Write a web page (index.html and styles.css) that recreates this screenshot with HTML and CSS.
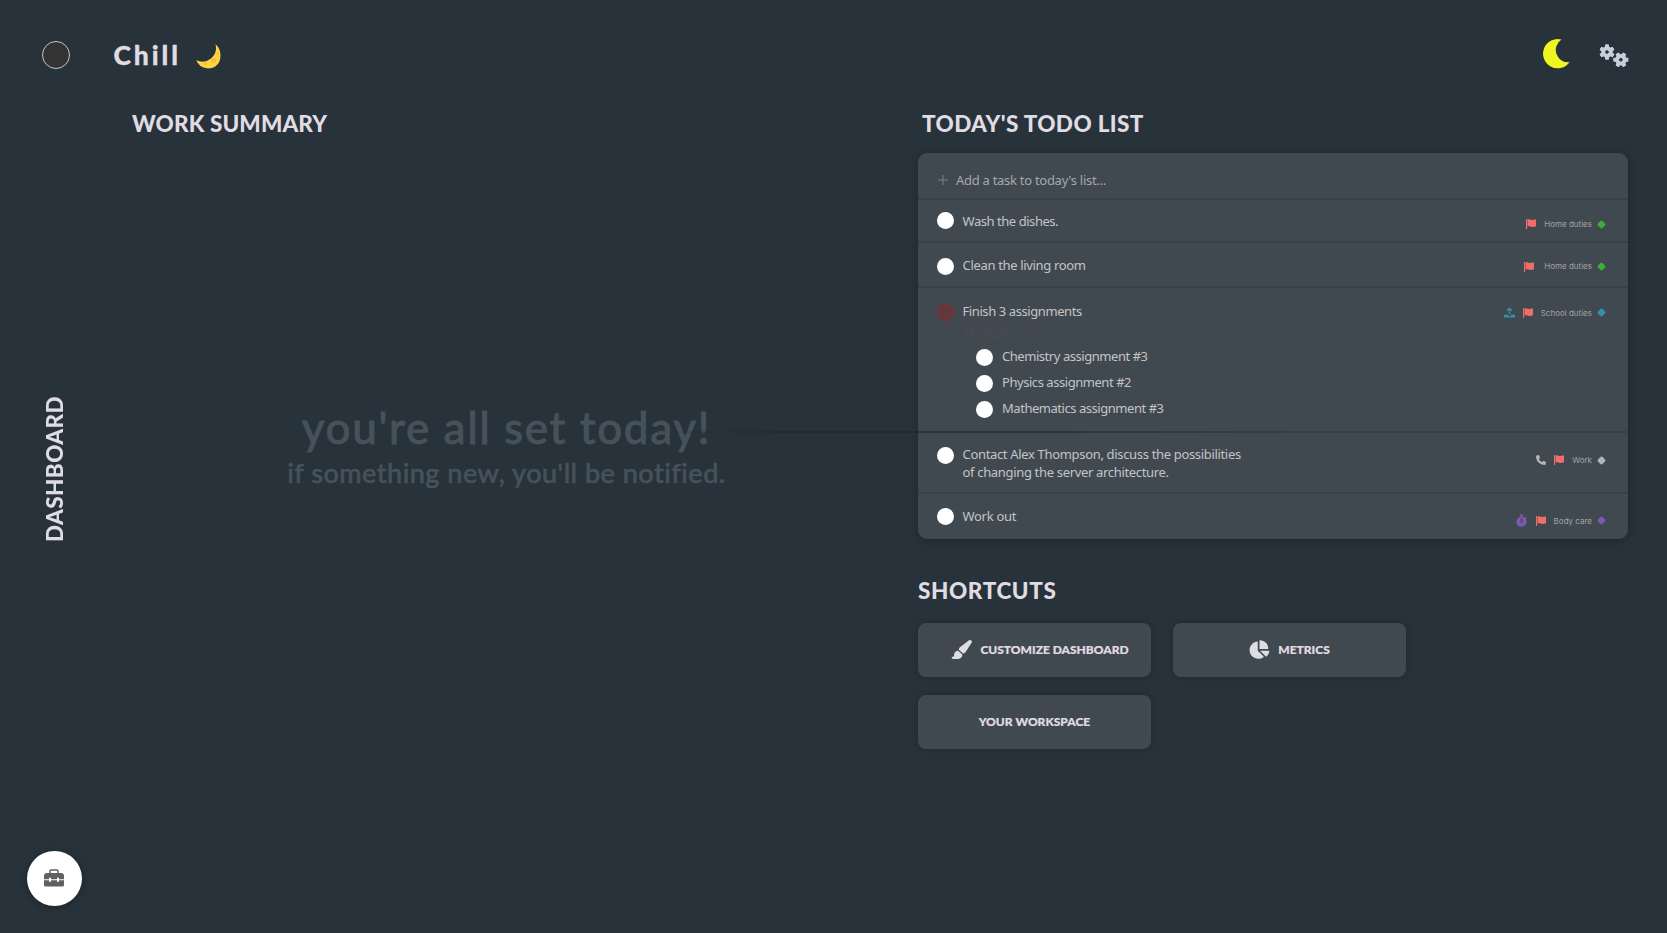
FILE: index.html
```html
<!DOCTYPE html>
<html lang="en">
<head>
<meta charset="utf-8">
<title>Chill – Dashboard</title>
<link rel="stylesheet" href="styles.css">
</head>
<body>
<svg class="defs" aria-hidden="true">
  <symbol id="flag" viewBox="0 0 20 20"><path d="M0 0h2.200v20H0z"/><path d="M3 1c4-1.500 6 1.500 9.500 1 2.500-.3 4-1 7.500-1v14c-3.500 0-5 1-7.500 1-3.500 0-5.500-2-9.500-1z"/></symbol>
  <symbol id="diamond" viewBox="0 0 20 20"><rect x="2.800" y="2.800" width="14.400" height="14.400" rx="4" transform="rotate(45 10 10)"/></symbol>
  <symbol id="gear" viewBox="-8 -8 16 16">
    <circle r="3.900" fill="none" stroke="currentColor" stroke-width="3.800"/>
    <g id="teeth"><rect x="-2" y="-7.700" width="4" height="15.400" rx="1" mask="url(#hole)"/><rect x="-2" y="-7.700" width="4" height="15.400" rx="1" transform="rotate(60)" mask="url(#hole)"/><rect x="-2" y="-7.700" width="4" height="15.400" rx="1" transform="rotate(120)" mask="url(#hole)"/></g>
  </symbol>
  <mask id="hole" maskUnits="userSpaceOnUse" x="-8" y="-8" width="16" height="16"><rect x="-8" y="-8" width="16" height="16" fill="#fff"/><circle r="2.100" fill="#000"/></mask>
</svg>

<aside class="rail">
  <button class="avatar" aria-label="Profile"></button>
  <div class="rail-title">DASHBOARD</div>
  <button class="toolbox" aria-label="Tools">
    <svg viewBox="0 0 20 18"><path d="M6 5V2a1 1 0 0 1 1-1h6a1 1 0 0 1 1 1v3" fill="none" stroke="currentColor" stroke-width="1.500"/><path d="M3 4h14a3 3 0 0 1 3 3v3.200h-5V9.500a1 1 0 0 0-2 0v.7H7v-.7a1 1 0 0 0-2 0v.7H0V7a3 3 0 0 1 3-3z"/><path d="M0 11.200h5V12a1 1 0 0 0 2 0v-.8h6V12a1 1 0 0 0 2 0v-.8h5V16a1.500 1.500 0 0 1-1.500 1.500h-17A1.500 1.500 0 0 1 0 16z"/></svg>
  </button>
</aside>

<div class="page">
  <header class="topbar">
    <h1 class="brand"><span class="brand-name">Chill</span>
      <svg class="crescent" viewBox="0 0 25 25"><path d="M19.500 .3A13.800 13.800 0 0 1 .3 16.300 12.800 12.800 0 0 0 23 18.500C25.600 13 25 4.500 19.500 .3z" fill="#ffd43f"/><circle cx="17.500" cy="16.500" r="2.600" fill="#f8bd3b"/><circle cx="9.500" cy="19.500" r="1.600" fill="#f8bd3b"/><circle cx="21.500" cy="9.500" r="1.300" fill="#f8bd3b"/></svg>
    </h1>
    <nav class="actions">
      <svg class="moon" viewBox="0 0 27 30"><path d="M18.500 .6A12.300 12.300 0 0 0 26.500 23.200 14.600 14.600 0 1 1 18.500 .6z"/></svg>
      <svg class="cogs" viewBox="0 0 30 24"><use href="#gear" x="0" y="0" width="16" height="16"/><g transform="rotate(30 21.900 15.800)"><use href="#gear" x="13.900" y="7.800" width="16" height="16"/></g></svg>
    </nav>
  </header>

  <main class="columns">
    <section class="summary">
      <h2 class="heading"><span class="t-summary">WORK SUMMARY</span></h2>
      <div class="empty">
        <p class="empty-big">you're all set today!</p>
        <p class="empty-small">if something new, you'll be notified.</p>
      </div>
    </section>

    <section class="side">
      <h2 class="heading heading-todo"><span class="t-todo">TODAY'S TODO LIST</span></h2>
      <div class="todo">
        <div class="row add"><svg class="plus" viewBox="0 0 10 10"><path d="M5 0v10M0 5h10"/></svg><span class="text w-add">Add a task to today's list...</span></div>

        <div class="row wash"><i class="check"></i><span class="text w-wash">Wash the dishes.</span>
          <div class="meta"><svg class="flag"><use href="#flag"/></svg><span class="tag">Home duties</span><svg class="dot green"><use href="#diamond"/></svg></div></div>

        <div class="row clean"><i class="check"></i><span class="text w-clean">Clean the living room</span>
          <div class="meta"><svg class="flag"><use href="#flag"/></svg><span class="tag">Home duties</span><svg class="dot green"><use href="#diamond"/></svg></div></div>

        <div class="row finish"><i class="check active"></i>
          <div class="body"><span class="text w-finish">Finish 3 assignments</span><span class="steps">Multiple steps &nbsp;&gt;</span>
            <ul class="subs">
              <li><i class="check"></i><span class="text w-chem">Chemistry assignment #3</span></li>
              <li><i class="check"></i><span class="text w-phys">Physics assignment #2</span></li>
              <li><i class="check"></i><span class="text w-math">Mathematics assignment #3</span></li>
            </ul></div>
          <div class="meta"><svg class="upload" viewBox="0 0 22 22"><path d="M11 15V3M6 7.500l5-5 5 5" fill="none" stroke="currentColor" stroke-width="2.600"/><path d="M0 15.500h7.500a3.500 3 0 0 0 7 0H22V21H0z"/></svg><svg class="flag"><use href="#flag"/></svg><span class="tag">School duties</span><svg class="dot blue"><use href="#diamond"/></svg></div></div>

        <div class="row contact"><i class="check"></i><span class="text w-contact">Contact Alex Thompson, discuss the possibilities<br>of changing the server architecture.</span>
          <div class="meta"><svg class="phone" viewBox="0 0 512 512"><path d="M164.900 24.600c-7.700-18.600-28-28.500-47.400-23.200l-88 24C12.100 30.200 0 46 0 64C0 311.400 200.600 512 448 512c18 0 33.800-12.100 38.600-29.500l24-88c5.300-19.400-4.600-39.700-23.200-47.400l-96-40c-16.300-6.800-35.200-2.100-46.300 11.600L304.700 368C234.300 334.700 177.300 277.700 144 207.300L193.300 167c13.700-11.200 18.400-30 11.600-46.300l-40-96z"/></svg><svg class="flag"><use href="#flag"/></svg><span class="tag">Work</span><svg class="dot grey"><use href="#diamond"/></svg></div></div>

        <div class="row workout"><i class="check"></i><span class="text w-work">Work out</span>
          <div class="meta"><svg class="watch" viewBox="0 0 448 512"><path d="M432 304c0 114.900-93.100 208-208 208S16 418.900 16 304c0-104 76.300-190.200 176-205.500V64h-28c-6.600 0-12-5.400-12-12V12c0-6.600 5.400-12 12-12h120c6.600 0 12 5.400 12 12v40c0 6.600-5.400 12-12 12h-28v34.500c37.500 5.800 71.700 21.600 99.700 44.600l27.500-27.500c4.700-4.700 12.300-4.700 17 0l28.300 28.300c4.700 4.700 4.700 12.300 0 17l-29.400 29.400-.6.6C419.700 223.300 432 262.200 432 304zm-176 36V188.500c0-6.600-5.400-12-12-12h-40c-6.600 0-12 5.400-12 12V340c0 6.600 5.400 12 12 12h40c6.600 0 12-5.400 12-12z"/></svg><svg class="flag"><use href="#flag"/></svg><span class="tag">Body care</span><svg class="dot purple"><use href="#diamond"/></svg></div></div>
      </div>

      <h2 class="heading heading-short"><span class="t-short">SHORTCUTS</span></h2>
      <div class="shortcuts">
        <button class="shortcut customize"><svg viewBox="16 0 560 512"><path d="M339.300 367.100c27.300-3.900 51.900-19.400 67.200-42.900L568.200 74.100c12.600-19.500 9.400-45.300-7.600-61.200S517.700-4.400 499.100 9.600L262.400 187.200c-24 18-38.200 46.100-38.400 76.100L339.300 367.100zm-19.600 25.400l-116-104.400C143.900 290.300 96 339.600 96 400c0 3.900 .2 7.800 .6 11.600C98.400 429.100 86.400 448 68.800 448H64c-17.700 0-32 14.300-32 32s14.300 32 32 32H208c61.900 0 112-50.100 112-112c0-2.500-.1-5-.2-7.500z"/></svg><span>CUSTOMIZE DASHBOARD</span></button>
        <button class="shortcut"><svg viewBox="16 0 576 512"><path d="M304 240V16.600c0-9 7-16.600 16-16.600C443.700 0 544 100.300 544 224c0 9-7.600 16-16.600 16H304zM32 272C32 150.700 122.100 50.300 239 34.300c9.200-1.300 17 6.100 17 15.400V288L412.500 444.500c6.700 6.700 6.200 17.700-1.500 23.100C371.800 495.600 323.800 512 272 512C139.500 512 32 404.600 32 272zm526.400 16c9.300 0 16.600 7.800 15.400 17c-7.700 55.900-34.600 105.600-73.900 142.300c-6 5.600-15.400 5.200-21.200-.7L320 288H558.400z"/></svg><span>METRICS</span></button>
        <button class="shortcut"><span>YOUR WORKSPACE</span></button>
      </div>
    </section>
  </main>
</div>
<div class="seam"></div>
</body>
</html>
```
FILE: styles.css
```css
* { box-sizing: border-box; }
body {
  margin: 0;
  height: 933px;
  display: flex;
  overflow: hidden;
  background: #27323a;
  color: #e0dce3;
  font-family: "Noto Sans", sans-serif;
  position: relative;
}
h1, h2, p, ul { margin: 0; padding: 0; }
svg { display: block; fill: currentColor; flex: none; }
button { border: 0; padding: 0; color: inherit; font: inherit; }
.defs { position: absolute; width: 0; height: 0; }

.rail {
  width: 110px;
  padding: 41px 0 27px 27px;
  display: flex;
  flex-direction: column;
  justify-content: space-between;
}
.avatar {
  width: 28px;
  height: 28px;
  margin-left: 14.5px;
  border: 1px solid #c9c6cc;
  border-radius: 50%;
  background: #333334;
}
.rail-title {
  margin: 17px 0 0 14px;
  writing-mode: vertical-rl;
  transform: rotate(180deg);
  width: 28px;
  font: 900 22.5px/28px Lato, sans-serif;
  letter-spacing: .4px;
}
.toolbox {
  width: 55px;
  height: 55px;
  margin-left: -.5px;
  border-radius: 50%;
  background: #fff;
  color: #5f6062;
  display: grid;
  place-items: center;
  box-shadow: 0 1px 7px rgba(0, 0, 0, .3);
}
.toolbox svg { width: 20px; height: 18px; }

.page { flex: 1; padding-right: 38px; }
.topbar {
  height: 110px;
  padding: 38px 0 0 3.5px;
  display: flex;
  justify-content: space-between;
}
.brand {
  display: flex;
  align-items: flex-start;
  font: 900 26.5px/34px Lato, sans-serif;
}
.brand-name { width: 82.5px; letter-spacing: 2.9px; -webkit-text-stroke: .3px; }
.crescent { width: 25px; height: 25px; margin-top: 6px; }
.actions { display: flex; align-items: flex-start; gap: 29px; }
.moon { width: 27px; height: 30px; margin-top: 1px; color: #eef51f; }
.cogs { width: 30px; height: 24px; margin-top: 6px; color: #c9cddb; }

.columns { display: grid; grid-template-columns: 808px 710px; }
.heading { font: 900 22.5px/28px Lato, sans-serif; white-space: nowrap; }
.summary .heading { padding-left: 22px; }
.heading-todo { padding-left: 4px; }
.t-summary { letter-spacing: .13px; }
.t-todo { letter-spacing: .38px; }
.t-short { letter-spacing: .6px; }
.empty { margin-top: 259px; width: 793px; text-align: center; color: #46515a; font-family: Lato, sans-serif; white-space: nowrap; }
.empty-big { font-size: 44px; line-height: 60px; font-weight: 500; letter-spacing: 1.6px; -webkit-text-stroke: .8px; }
.empty-small { font-size: 27px; line-height: 30px; padding-top: 1px; font-weight: 500; letter-spacing: .5px; -webkit-text-stroke: .6px; }

.todo {
  margin-top: 15px;
  height: 386px;
  border-radius: 9px;
  background: #414950;
  color: #c3c4c6;
  box-shadow: 0 1px 9px rgba(0, 0, 0, .25);
}
.row { display: flex; align-items: flex-start; padding: 0 22px 0 19px; border-bottom: 2px solid #394047; }
.text { font-size: 13px; line-height: 18px; white-space: nowrap; }
.w-add { letter-spacing: -.28px; }
.w-wash, .w-chem, .w-phys { letter-spacing: -.45px; }
.w-math { letter-spacing: -.46px; }
.w-clean, .w-contact { letter-spacing: -.33px; }
.w-finish { letter-spacing: -.41px; }
.w-work { letter-spacing: -.3px; }
.check { flex: none; width: 17px; height: 17px; margin-right: 8.5px; border-radius: 50%; background: #fff; }
.check.active { background: #5f393c; border: 1px solid #94282d; }
.add { height: 47px; padding-top: 18px; color: #a4a8ab; }
.plus { width: 10px; height: 10px; margin: 4px 8px 0 1px; stroke: #7b8186; fill: none; }
.wash { height: 43px; padding-top: 12px; }
.clean { height: 45px; padding-top: 13px; }
.clean > .check { margin-top: 2px; }
.finish { height: 145px; padding-top: 14px; }
.finish > .check { margin-top: 2px; }
.contact { height: 61px; padding-top: 12px; }
.contact > .check { margin-top: 2px; }
.workout { height: 45px; padding-top: 12.5px; border: 0; }
.workout > .check { margin-top: 1px; }
.body { display: flex; flex-direction: column; }
.steps { margin-top: 4px; font-size: 13px; line-height: 18px; color: #4a4b4e; }
.subs { margin: 5px 0 0 13px; list-style: none; }
.subs li { height: 26px; display: flex; }
.subs .check { margin-top: 2px; margin-right: 9.5px; }

.meta { margin-left: auto; display: flex; align-items: center; height: 14px; }
.wash .meta { margin-top: 5px; }
.clean .meta { margin-top: 3px; }
.finish .meta { margin-top: 3.5px; }
.contact .meta { margin-top: 8px; }
.workout .meta { margin-top: 7px; }
.flag { width: 10px; height: 10px; color: #f36c6c; margin-right: 8px; }
.wash .flag { margin-top: -1px; }
.clean .flag { margin-right: 10px; margin-top: 1px; }
.tag { font: 8px/14px Inter, sans-serif; color: #a0a3a6; margin-right: 5px; }
.dot { width: 9px; height: 9px; }
.green { color: #3aae36; }
.blue { color: #3490b1; }
.grey { color: #b4b4b4; }
.purple { color: #7e57b2; }
.upload { width: 11px; height: 11px; margin-right: 8px; color: #3490b1; }
.phone { width: 10px; height: 10px; margin-right: 8px; color: #b4b4b4; }
.watch { width: 11px; height: 13px; margin-right: 9px; color: #7e57b2; }

.heading-short { margin-top: 38px; }
.shortcuts { margin-top: 17.5px; display: grid; grid-template-columns: 233px 233px; gap: 18px 22px; }
.shortcut {
  height: 54px;
  border-radius: 8px;
  background: #414950;
  display: flex;
  align-items: center;
  justify-content: center;
  gap: 8px;
  font: 900 12px/16px Lato, sans-serif;
  white-space: nowrap;
  -webkit-text-stroke: .2px;
  box-shadow: 0 0 6px rgba(0, 0, 0, .2);
}
.shortcut svg { width: 21px; height: 19px; }
.customize { padding-left: 11px; }

/* faint hairline crossing both columns */
.seam {
  position: absolute;
  left: 620px;
  top: 431px;
  width: 740px;
  height: 2px;
  background: linear-gradient(90deg, transparent, rgba(30, 38, 46, .5) 25%, rgba(30, 38, 46, .4) 60%, transparent);
}
```
